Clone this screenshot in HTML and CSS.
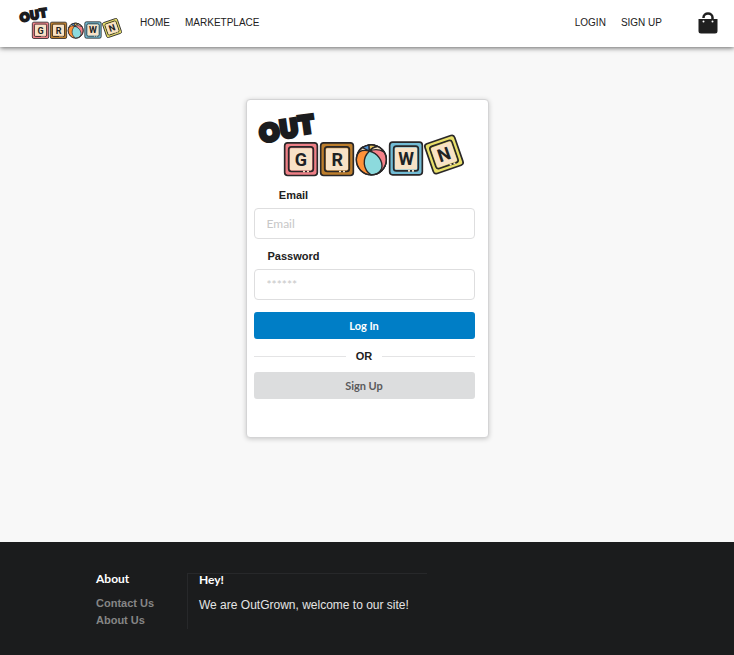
FILE: index.html
```html
<!DOCTYPE html>
<html lang="en">
<head>
<meta charset="utf-8">
<meta name="viewport" content="width=device-width, initial-scale=1">
<title>OutGrown</title>
<link rel="stylesheet" href="styles.css">
</head>
<body>
<header class="topbar">
  <a class="brand" href="#" aria-label="OutGrown">
    <svg class="brand-logo" viewBox="54 66 624 200">
      <g class="logo-out">
        <text x="88" y="155" transform="rotate(-10 88 130)">O</text>
        <text x="147" y="143" transform="rotate(-8 147 118)">U</text>
        <text x="199" y="131" transform="rotate(-8 199 106)">T</text>
      </g>
      <g class="logo-tile">
        <rect x="134" y="161" width="98" height="98" rx="9" fill="#ee7f86"/>
        <rect x="146" y="173" width="74" height="74" rx="8" fill="#ee7f86"/>
        <rect class="logo-face" x="150" y="177" width="66" height="66" rx="4"/>
        <path class="logo-gap" d="M189 247h6M201 247h6"/>
        <text x="183" y="230">G</text>
      </g>
      <g class="logo-tile">
        <rect x="242" y="161" width="98" height="98" rx="9" fill="#bd7e2c"/>
        <rect x="254" y="173" width="74" height="74" rx="8" fill="#bd7e2c"/>
        <rect class="logo-face" x="258" y="177" width="66" height="66" rx="4"/>
        <path class="logo-gap" d="M297 247h6M309 247h6"/>
        <text x="292" y="230">R</text>
      </g>
      <g class="logo-ball">
        <circle cx="394" cy="212" r="45" fill="#ff9238"/>
        <path d="M388 186C397 175 415 172 429 183C446 204 442 235 416 251C430 224 416 192 388 186Z" fill="#f58189"/>
        <path d="M388 186C364 208 370 242 393 257C408 257 420 249 425 238C430 214 412 192 388 186Z" fill="#8cdadd"/>
        <path d="M388 186C372 180 358 185 352 196C355 184 361 177 369 173Z" fill="#f6e7cb"/>
        <path d="M388 186L367 175Q376 168 388 167Z" fill="#4f91d0"/>
        <path d="M388 186L387 167Q401 165 412 172Q397 174 388 186Z" fill="#e7c45b"/>
        <path d="M388 186Q399 173 413 172Q425 177 432 188Q410 176 388 186Z" fill="#f6e7cb"/>
        <circle cx="394" cy="212" r="45" fill="none"/>
      </g>
      <g class="logo-tile">
        <rect x="449" y="159" width="98" height="98" rx="9" fill="#72bcd5"/>
        <rect x="461" y="171" width="74" height="74" rx="8" fill="#72bcd5"/>
        <rect class="logo-face" x="465" y="175" width="66" height="66" rx="4"/>
        <path class="logo-gap" d="M504 245h6M516 245h6"/>
        <text x="498" y="229">W</text>
      </g>
      <g class="logo-tile" transform="rotate(-19 612 196)">
        <rect x="565" y="149" width="94" height="94" rx="9" fill="#e8df69"/>
        <rect x="577" y="161" width="70" height="70" rx="8" fill="#e8df69"/>
        <rect class="logo-face" x="581" y="165" width="62" height="62" rx="4"/>
        <path class="logo-gap" d="M618 231h6M630 231h6"/>
        <text x="612" y="215">N</text>
      </g>
    </svg>
  </a>
  <nav class="nav" aria-label="Main">
    <a href="#">HOME</a>
    <a href="#">MARKETPLACE</a>
  </nav>
  <nav class="nav nav-account" aria-label="Account">
    <a href="#">LOGIN</a>
    <a href="#">SIGN UP</a>
  </nav>
  <a class="bag" href="#" aria-label="Shopping bag">
    <svg viewBox="0 0 20 22"><path d="M5.500 6V5.500a4.500 4 0 0 1 9 0V7" fill="none" stroke="#1f1f1f" stroke-width="2.500"/><path d="M.5 7h19v12a2.500 2.500 0 0 1-2.500 2.500h-14a2.500 2.500 0 0 1-2.500-2.500Z" fill="#1f1f1f"/><circle cx="5.500" cy="9.500" r="1" fill="#fff"/><circle cx="14.500" cy="9.500" r="1" fill="#fff"/></svg>
  </a>
</header>

<main class="main">
  <form class="card">
    <svg class="card-logo" role="img" aria-label="OutGrown" viewBox="54 66 624 200">
      <g class="logo-out">
        <text x="88" y="155" transform="rotate(-10 88 130)">O</text>
        <text x="147" y="143" transform="rotate(-8 147 118)">U</text>
        <text x="199" y="131" transform="rotate(-8 199 106)">T</text>
      </g>
      <g class="logo-tile">
        <rect x="134" y="161" width="98" height="98" rx="9" fill="#ee7f86"/>
        <rect x="146" y="173" width="74" height="74" rx="8" fill="#ee7f86"/>
        <rect class="logo-face" x="150" y="177" width="66" height="66" rx="4"/>
        <path class="logo-gap" d="M189 247h6M201 247h6"/>
        <text x="183" y="230">G</text>
      </g>
      <g class="logo-tile">
        <rect x="242" y="161" width="98" height="98" rx="9" fill="#bd7e2c"/>
        <rect x="254" y="173" width="74" height="74" rx="8" fill="#bd7e2c"/>
        <rect class="logo-face" x="258" y="177" width="66" height="66" rx="4"/>
        <path class="logo-gap" d="M297 247h6M309 247h6"/>
        <text x="292" y="230">R</text>
      </g>
      <g class="logo-ball">
        <circle cx="394" cy="212" r="45" fill="#ff9238"/>
        <path d="M388 186C397 175 415 172 429 183C446 204 442 235 416 251C430 224 416 192 388 186Z" fill="#f58189"/>
        <path d="M388 186C364 208 370 242 393 257C408 257 420 249 425 238C430 214 412 192 388 186Z" fill="#8cdadd"/>
        <path d="M388 186C372 180 358 185 352 196C355 184 361 177 369 173Z" fill="#f6e7cb"/>
        <path d="M388 186L367 175Q376 168 388 167Z" fill="#4f91d0"/>
        <path d="M388 186L387 167Q401 165 412 172Q397 174 388 186Z" fill="#e7c45b"/>
        <path d="M388 186Q399 173 413 172Q425 177 432 188Q410 176 388 186Z" fill="#f6e7cb"/>
        <circle cx="394" cy="212" r="45" fill="none"/>
      </g>
      <g class="logo-tile">
        <rect x="449" y="159" width="98" height="98" rx="9" fill="#72bcd5"/>
        <rect x="461" y="171" width="74" height="74" rx="8" fill="#72bcd5"/>
        <rect class="logo-face" x="465" y="175" width="66" height="66" rx="4"/>
        <path class="logo-gap" d="M504 245h6M516 245h6"/>
        <text x="498" y="229">W</text>
      </g>
      <g class="logo-tile" transform="rotate(-19 612 196)">
        <rect x="565" y="149" width="94" height="94" rx="9" fill="#e8df69"/>
        <rect x="577" y="161" width="70" height="70" rx="8" fill="#e8df69"/>
        <rect class="logo-face" x="581" y="165" width="62" height="62" rx="4"/>
        <path class="logo-gap" d="M618 231h6M630 231h6"/>
        <text x="612" y="215">N</text>
      </g>
    </svg>
    <label for="email">Email</label>
    <input id="email" type="email" placeholder="Email">
    <label for="password">Password</label>
    <input id="password" type="password" placeholder="******">
    <button class="btn btn-primary" type="submit">Log In</button>
    <div class="divider">OR</div>
    <button class="btn btn-secondary" type="button">Sign Up</button>
  </form>
</main>

<footer class="footer">
  <section class="about">
    <h2>About</h2>
    <a href="#">Contact Us</a>
    <a href="#">About Us</a>
  </section>
  <section class="hey">
    <h2>Hey!</h2>
    <p>We are OutGrown, welcome to our site!</p>
  </section>
</footer>
</body>
</html>
```
FILE: styles.css
```css
* {
  box-sizing: border-box;
}

body {
  display: flex;
  flex-direction: column;
  min-height: 100vh;
  margin: 0;
  background: #f8f8f8;
  color: #212121;
  font-family: "Liberation Sans", Arial, sans-serif;
  font-size: 11px;
}

a {
  color: inherit;
  text-decoration: none;
}

.logo-out text {
  font: 900 70px Lato, sans-serif;
  text-anchor: middle;
  fill: #1b1c1e;
  stroke: #1b1c1e;
  stroke-width: 13px;
}

.logo-tile rect,
.logo-ball {
  stroke: #292728;
  stroke-width: 5px;
}

.logo-ball {
  stroke-width: 4px;
  stroke-linejoin: round;
}

.logo-tile .logo-face {
  fill: #f8e2c6;
  stroke: none;
}

.logo-gap {
  stroke: #f8e2c6;
  stroke-width: 5px;
}

.logo-tile text {
  font: 700 54px Roboto, sans-serif;
  text-anchor: middle;
  fill: #202224;
}

.topbar {
  display: flex;
  align-items: center;
  height: 47px;
  padding: 0 16px 2px 19px;
  background: #fff;
  box-shadow: 0 1px 5px rgba(0, 0, 0, 0.6);
}

.brand {
  display: flex;
  margin-right: 17px;
}

.brand-logo {
  width: 104px;
  height: 34px;
  overflow: visible;
}

.nav {
  display: flex;
  gap: 15px;
  padding-bottom: 1px;
  font-size: 10px;
}

.nav-account {
  margin-left: auto;
}

.bag {
  display: flex;
  margin-left: 36px;
}

.bag svg {
  width: 20px;
  height: 22px;
}

.main {
  flex: 1;
  padding: 52px 16px 104px;
}

.card {
  display: flex;
  flex-direction: column;
  max-width: 243px;
  margin: 0 auto;
  padding: 11px 13px 38px 7px;
  border: 1px solid #d4d4d5;
  border-radius: 4px;
  background: #fff;
  box-shadow: 0 1px 5px rgba(0, 0, 0, 0.2);
}

.card-logo {
  width: 208px;
  height: 67px;
  margin-left: 4px;
  overflow: visible;
}

.card label {
  width: 80px;
  margin: 11px 0 6px;
  font-weight: 700;
  line-height: 13px;
  text-align: center;
}

.card input {
  width: 100%;
  height: 31px;
  padding: 0 12px;
  border: 1px solid #dededf;
  border-radius: 4px;
  background: #fff;
  color: #212121;
  font: 12px Lato, sans-serif;
}

.card input::placeholder {
  color: #c7c7c7;
}

.btn {
  height: 27px;
  padding: 0 0 1px;
  border: 0;
  border-radius: 3px;
  font: 700 11px Lato, sans-serif;
}

.btn-primary {
  margin-top: 12px;
  background: #007ec6;
  color: #fff;
}

.btn-secondary {
  background: #dcddde;
  color: #5a5a5b;
}

.divider {
  display: flex;
  align-items: center;
  gap: 10px;
  padding-top: 1px;
  font-weight: 700;
  line-height: 32px;
}

.divider::before,
.divider::after {
  flex: 1;
  height: 1px;
  background: #e4e4e5;
  content: "";
}

.footer {
  display: flex;
  padding: 31px 96px 28px;
  border-bottom: 1px solid #0c0c0c;
  background: #1b1c1d;
}

.footer h2 {
  margin: 0 0 11px;
  color: #fff;
  font: 700 12px/11px Lato, sans-serif;
}

.about {
  display: flex;
  flex-direction: column;
  width: 91px;
  color: #868686;
  font-weight: 700;
  line-height: 17px;
}

.hey {
  width: 240px;
  padding-left: 11px;
  border-top: 1px solid #27282a;
  border-left: 1px solid #27282a;
  color: #e4e4e4;
}

.hey p {
  margin: 0;
  font-size: 12px;
  line-height: 19px;
}
```
